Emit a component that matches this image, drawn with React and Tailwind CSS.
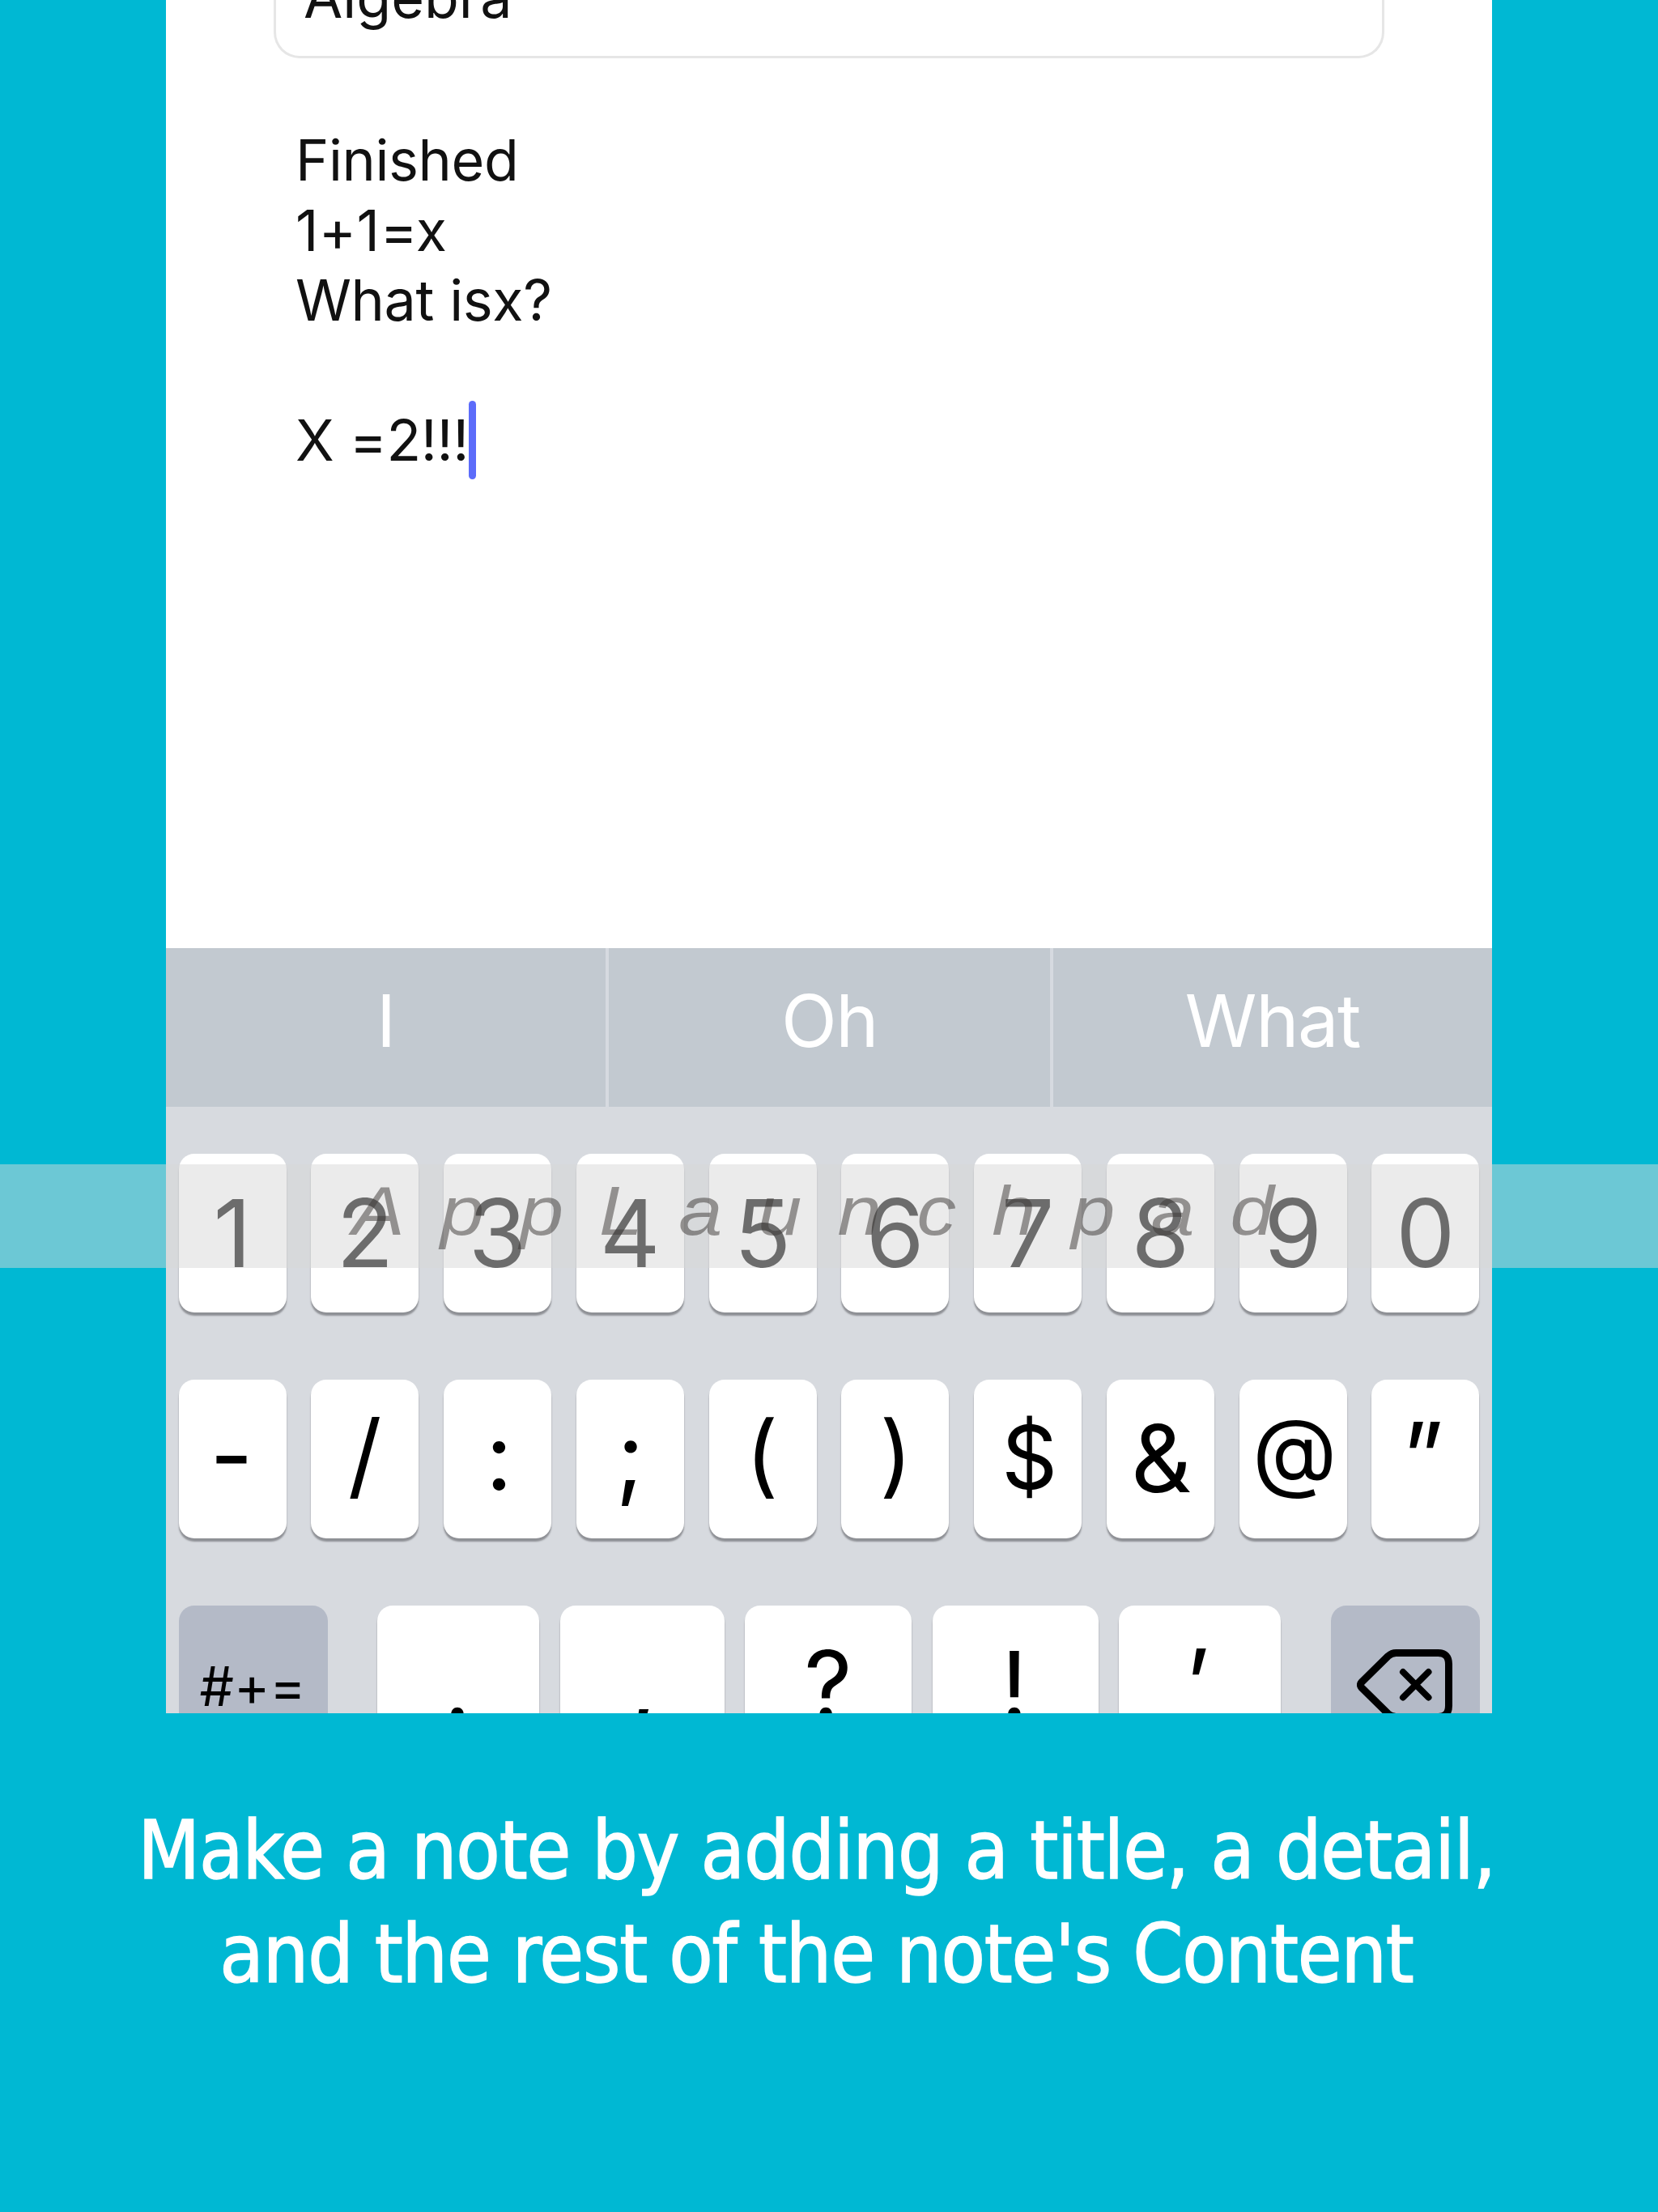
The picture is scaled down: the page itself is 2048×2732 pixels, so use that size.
const ROW_ONE = ["1", "2", "3", "4", "5", "6", "7", "8", "9", "0"].map((glyph) => ({ glyph }));

// Punctuation sits slightly above its natural baseline so it looks centred on the key caps.
const ROW_TWO = [
  { glyph: "-", shift: "-translate-x-px -translate-y-[5px]" },
  { glyph: "/", shift: "-translate-y-[6px]" },
  { glyph: ":", shift: "translate-x-[2px] -translate-y-[4px]" },
  { glyph: ";", shift: "-translate-y-[4px]" },
  { glyph: "(", shift: "-translate-x-px -translate-y-[6px] text-[111px]" },
  { glyph: ")", shift: "translate-x-px -translate-y-[6px] text-[111px]" },
  { glyph: "$", shift: "translate-x-[2px] -translate-y-[2px] text-[108px]" },
  { glyph: "&", shift: "translate-x-px -translate-y-px" },
  { glyph: "@", shift: "translate-x-[2px] -translate-y-[11px] text-[108px]" },
  { glyph: "”", shift: "-translate-x-[3px] -translate-y-[4px]" },
];

const ROW_THREE = [
  { glyph: ".", width: "w-[200px]", shift: "-translate-x-px" },
  { glyph: ",", width: "w-[203px]", shift: "translate-x-px" },
  { glyph: "?", width: "w-[206px]", shift: "" },
  { glyph: "!", width: "w-[205px]", shift: "-translate-x-px" },
  { glyph: "’", width: "w-[200px]", shift: "-translate-x-[3px] -translate-y-[3px]" },
];

function Key({ glyph, shift = "", width = "w-[133px]" }) {
  return (
    <div
      className={`flex h-[196px] justify-center rounded-[19px] bg-white text-[116px] leading-[196px] text-black shadow-[0_4px_2px_#8e9095] ${width}`}
    >
      <span className={shift}>{glyph}</span>
    </div>
  );
}

function Backspace() {
  return (
    <svg viewBox="0 0 120 90" className="mt-[53px] h-[90px] w-[120px]" fill="none" stroke="black" strokeLinecap="round" strokeLinejoin="round">
      <path strokeWidth="9" d="M6 41.500 L38.500 9.500 Q43 5.500 48.500 5.500 H100.500 Q113.500 5.500 113.500 19.500 V70.500 Q113.500 84.500 100.500 84.500 H48.500 Q43 84.500 38.500 80.500 L6 48.500 Q3 45 6 41.500 Z" />
      <path strokeWidth="8" d="M57 29 L88.500 60.500 M88.500 29 L57 60.500" />
    </svg>
  );
}

function NoteForm() {
  return (
    <div className="flex h-[1171px] flex-col px-[133px] text-[70px] text-[#111]">
      <div className="flex h-[72px] flex-col justify-end rounded-b-[32px] border-x-[3px] border-b-[3px] border-[#e6e6e6] pb-[27px] pl-[34px]">
        <div className="leading-[90px]">Algebra</div>
      </div>
      <div className="pt-[83px] pl-[27px] leading-[86.5px] tracking-[-0.4px]">
        <p>Finished</p>
        <p className="tracking-[0.4px]">1+1=x</p>
        <p>What isx?</p>
        <p className="h-[86px]" />
        <p className="flex items-center">
          X =2!!!
          <span className="-my-2 h-[97px] w-[9px] rounded-full bg-[#5c6cfa]" />
        </p>
      </div>
    </div>
  );
}

function Suggestions() {
  return (
    <div className="grid h-[196px] grid-cols-[547px_549px_542px] divide-x-4 divide-[#d6dae0] bg-[#c2c9d0] text-center text-[90px] leading-[180px] tracking-[-1.4px] text-white">
      <div>I</div>
      <div>Oh</div>
      <div>What</div>
    </div>
  );
}

function Keyboard() {
  return (
    <div className="flex h-[749px] flex-col gap-[83px] overflow-hidden bg-[#d7dadf] px-[15.5px] pt-[58px]">
      <div className="flex justify-between">
        {ROW_ONE.map((k) => <Key key={k.glyph} {...k} />)}
      </div>
      <div className="flex justify-between">
        {ROW_TWO.map((k) => <Key key={k.glyph} {...k} />)}
      </div>
      <div className="flex justify-between">
        <div className="h-[196px] w-[184px] rounded-[19px] bg-[#b4bac7] pr-px text-center text-[67px] leading-[199px]">#+=</div>
        <div className="flex gap-[25.5px]">
          {ROW_THREE.map((k) => <Key key={k.glyph} {...k} />)}
        </div>
        <div className="flex h-[196px] w-[184px] justify-center rounded-[19px] bg-[#b4bac7]">
          <Backspace />
        </div>
      </div>
    </div>
  );
}

function Watermark() {
  return (
    <div className="absolute inset-x-0 top-[1438px] h-[128px] bg-[#d8d8d8]/50 pl-[435px]">
      <div className="origin-left scale-x-[1.13] font-['Liberation_Sans',Arial,sans-serif] text-[86px] leading-[114px] tracking-[39px] text-[#393634]/50 italic">
        AppLaunchpad
      </div>
    </div>
  );
}

export default function App() {
  return (
    <div className="relative h-[2732px] w-[2048px] overflow-hidden bg-[#00b8d3]">
      <main className="ml-[205px] h-[2116px] w-[1638px] overflow-hidden bg-white font-['Inter',sans-serif]">
        <NoteForm />
        <Suggestions />
        <Keyboard />
      </main>
      <p className="pt-[106px] pr-[31px] text-center font-['DejaVu_Sans_Condensed','DejaVu_Sans',sans-serif] text-[99px] leading-[128px] tracking-[-1.1px] text-white [-webkit-text-stroke:1.5px_white]">
        Make a note by adding a title, a detail,
        <br />
        and the rest of the note's Content
      </p>
      <Watermark />
    </div>
  );
}
